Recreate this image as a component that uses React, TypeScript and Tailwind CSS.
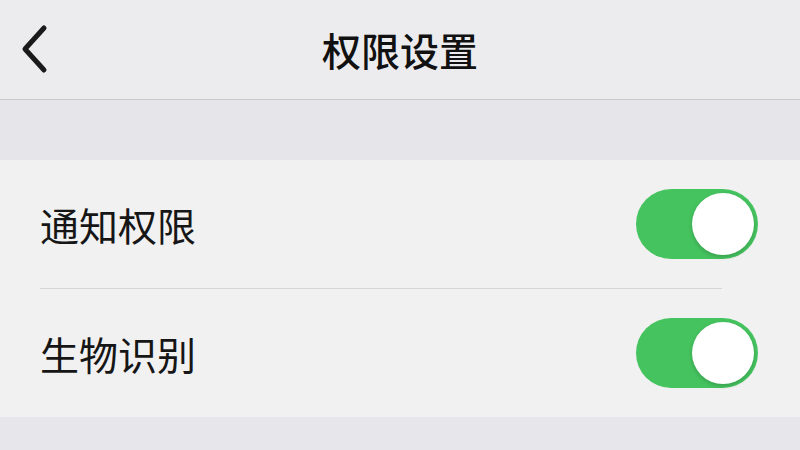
import { useState } from "react";

const cjk = { fontFamily: '"Noto Sans CJK SC", "Noto Sans", sans-serif' };

function Toggle({ on, onChange }: { on: boolean; onChange: () => void }) {
  return (
    <button
      onClick={onChange}
      className={`relative w-[122px] h-[70px] rounded-full flex items-center px-[4px] shrink-0 ${
        on ? "bg-[#45c35f] justify-end" : "bg-[#e0e0e2] justify-start"
      }`}
    >
      <span className="w-[62px] h-[62px] rounded-full bg-white shadow-[0_2px_4px_rgba(0,0,0,0.18)]" />
    </button>
  );
}

function Row({ label, on, onChange }: { label: string; on: boolean; onChange: () => void }) {
  return (
    <div className="h-[128px] flex items-center justify-between pl-[40px] pr-[42px]">
      <span className="text-[39px] text-[#161616] leading-none" style={cjk}>
        {label}
      </span>
      <Toggle on={on} onChange={onChange} />
    </div>
  );
}

export default function App() {
  const [notify, setNotify] = useState(true);
  const [bio, setBio] = useState(true);

  return (
    <div className="w-[800px] h-[450px] flex flex-col bg-[#e7e7eb] overflow-hidden" style={cjk}>
      <header className="h-[100px] shrink-0 relative flex items-center justify-center bg-[#ececee] border-b border-[#c9c9cc]">
        <button className="absolute left-[20px] top-[24px] w-[30px] h-[50px]">
          <svg viewBox="0 0 30 50" className="w-full h-full" fill="none">
            <polyline
              points="24,4 5,25 24,46"
              stroke="#1a1a1a"
              strokeWidth="5"
              strokeLinecap="round"
              strokeLinejoin="round"
            />
          </svg>
        </button>
        <h1 className="text-[39px] font-medium text-[#111] leading-none">权限设置</h1>
      </header>

      <div className="h-[60px] shrink-0 bg-[#e6e6ea]" />

      <section className="bg-[#f1f1f1] shrink-0">
        <Row label="通知权限" on={notify} onChange={() => setNotify(!notify)} />
        <div className="ml-[40px] mr-[78px] h-px bg-[#d6d6d8]" />
        <Row label="生物识别" on={bio} onChange={() => setBio(!bio)} />
      </section>
    </div>
  );
}
